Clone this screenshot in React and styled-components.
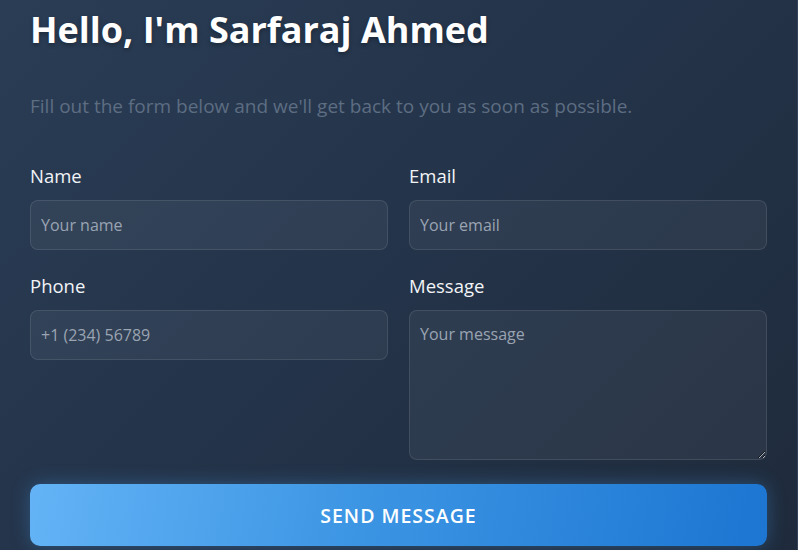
import React from "react";
import styled, { createGlobalStyle } from "styled-components";

const Global = createGlobalStyle`
  html, body { margin: 0; padding: 0; }
  body {
    font-family: "Open Sans", "Noto Sans", sans-serif;
    background: #243348;
  }
  * { box-sizing: border-box; }
`;

const Page = styled.div`
  width: 798px;
  height: 550px;
  overflow: hidden;
  background: linear-gradient(135deg, #2a3d55 0%, #24344a 45%, #1f2b3c 100%);
  border-right: 1px solid #34445a;
  padding: 4px 30px 0 30px;
`;

const Title = styled.h1`
  margin: 0;
  font-size: 36px;
  line-height: 52px;
  font-weight: 700;
  color: #ffffff;
  text-shadow: 0 2px 4px rgba(0, 0, 0, 0.3);
`;

const Subtitle = styled.p`
  margin: 37px 0 0 0;
  font-size: 19px;
  line-height: 26px;
  color: #5d6d82;
`;

const Grid = styled.form`
  margin-top: 45px;
  display: grid;
  grid-template-columns: 1fr 1fr;
  column-gap: 21px;
  row-gap: 24px;
  align-items: start;
`;

const Column = styled.div`
  display: flex;
  flex-direction: column;
  gap: 24px;
`;

const Field = styled.label`
  display: flex;
  flex-direction: column;
  gap: 12px;
`;

const LabelText = styled.span`
  font-size: 18.5px;
  line-height: 24px;
  font-weight: 500;
  color: #f2f4f7;
`;

const controlStyles = `
  width: 100%;
  font-family: inherit;
  font-size: 16px;
  color: #e6eaf0;
  background: rgba(255, 255, 255, 0.05);
  border: 1px solid rgba(255, 255, 255, 0.1);
  border-radius: 8px;
  outline: none;
  &::placeholder { color: #9aa4b2; }
`;

const Input = styled.input`
  ${controlStyles}
  height: 50px;
  padding: 0 10px;
`;

const TextArea = styled.textarea`
  ${controlStyles}
  height: 150px;
  padding: 12px 10px;
  resize: vertical;
  display: block;
  line-height: 22px;
`;

const Button = styled.button`
  grid-column: 1 / -1;
  height: 62px;
  width: 100%;
  border: none;
  border-radius: 10px;
  background: linear-gradient(100deg, #63b3f6 0%, #3c95e3 45%, #1c76d2 100%);
  box-shadow: 0 0 18px rgba(66, 153, 225, 0.35);
  color: #ffffff;
  font-family: inherit;
  font-size: 19.5px;
  font-weight: 600;
  letter-spacing: 1px;
  text-transform: uppercase;
  cursor: pointer;
`;

export default function App() {
  return (
    <>
      <Global />
      <Page>
        <Title>Hello, I'm Sarfaraj Ahmed</Title>
        <Subtitle>
          Fill out the form below and we'll get back to you as soon as possible.
        </Subtitle>
        <Grid onSubmit={(e) => e.preventDefault()}>
          <Column>
            <Field>
              <LabelText>Name</LabelText>
              <Input placeholder="Your name" />
            </Field>
            <Field>
              <LabelText>Phone</LabelText>
              <Input placeholder="+1 (234) 56789" />
            </Field>
          </Column>
          <Column>
            <Field>
              <LabelText>Email</LabelText>
              <Input placeholder="Your email" />
            </Field>
            <Field>
              <LabelText>Message</LabelText>
              <TextArea placeholder="Your message" />
            </Field>
          </Column>
          <Button type="submit">Send Message</Button>
        </Grid>
      </Page>
    </>
  );
}
